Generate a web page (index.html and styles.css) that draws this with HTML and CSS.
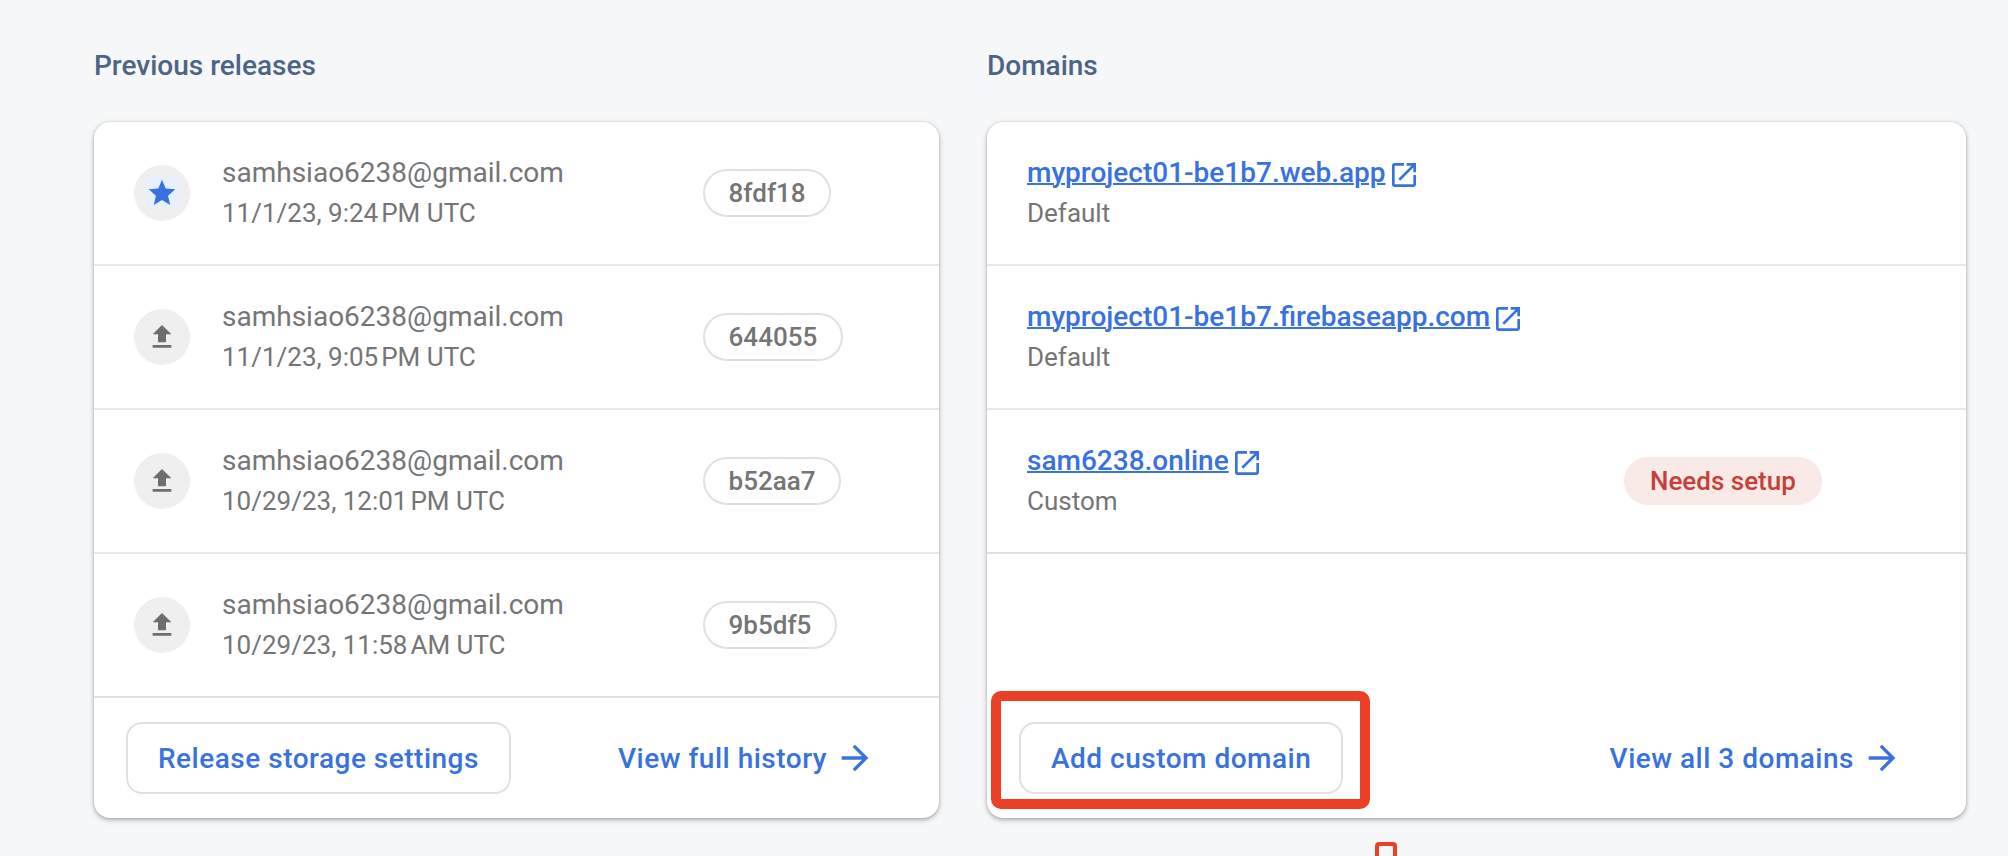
FILE: index.html
```html
<!DOCTYPE html>
<html lang="en">
<head>
<meta charset="utf-8">
<title>Hosting</title>
<link rel="stylesheet" href="styles.css">
</head>
<body>
<svg class="defs" width="0" height="0" aria-hidden="true">
  <symbol id="star" viewBox="0 0 24 24"><path d="M12 17.27L18.18 21l-1.64-7.03L22 9.24l-7.19-.61L12 2 9.19 8.63 2 9.24l5.46 4.73L5.82 21z"/></symbol>
  <symbol id="upload" viewBox="0 0 24 24"><path d="M9 16h6v-6h4l-7-7-7 7h4zM5 18h14v2H5z"/></symbol>
  <symbol id="open" viewBox="0 0 24 24"><path d="M19 19H5V5h7V3H5a2 2 0 0 0-2 2v14a2 2 0 0 0 2 2h14c1.1 0 2-.9 2-2v-7h-2v7zM14 3v2h3.59l-9.83 9.83 1.41 1.41L19 6.41V10h2V3h-7z"/></symbol>
  <symbol id="arrow" viewBox="0 0 24 24"><path d="M12 4l-1.41 1.41L16.17 11H4v2h12.17l-5.58 5.59L12 20l8-8z"/></symbol>
</svg>
<main class="page">
  <section class="panel releases">
    <h2 class="title">Previous releases</h2>
    <div class="card">
      <div class="row">
        <span class="status"><svg class="status-icon current"><use href="#star"/></svg></span>
        <div class="info"><div class="primary">samhsiao6238@gmail.com</div><div class="secondary">11/1/23, 9:24<span class="meridiem">PM</span> UTC</div></div>
        <span class="chip">8fdf18</span>
      </div>
      <div class="row">
        <span class="status"><svg class="status-icon"><use href="#upload"/></svg></span>
        <div class="info"><div class="primary">samhsiao6238@gmail.com</div><div class="secondary">11/1/23, 9:05<span class="meridiem">PM</span> UTC</div></div>
        <span class="chip">644055</span>
      </div>
      <div class="row">
        <span class="status"><svg class="status-icon"><use href="#upload"/></svg></span>
        <div class="info"><div class="primary">samhsiao6238@gmail.com</div><div class="secondary">10/29/23, 12:01<span class="meridiem">PM</span> UTC</div></div>
        <span class="chip">b52aa7</span>
      </div>
      <div class="row last">
        <span class="status"><svg class="status-icon"><use href="#upload"/></svg></span>
        <div class="info"><div class="primary">samhsiao6238@gmail.com</div><div class="secondary">10/29/23, 11:58<span class="meridiem">AM</span> UTC</div></div>
        <span class="chip">9b5df5</span>
      </div>
      <div class="footer">
        <button class="button">Release storage settings</button>
        <a class="more">View full history<svg class="arrow"><use href="#arrow"/></svg></a>
      </div>
    </div>
  </section>
  <section class="panel domains">
    <h2 class="title">Domains</h2>
    <div class="card">
      <div class="row">
        <div class="info"><div class="primary"><a class="link">myproject01-be1b7.web.app</a><svg class="open"><use href="#open"/></svg></div><div class="secondary">Default</div></div>
      </div>
      <div class="row">
        <div class="info"><div class="primary"><a class="link">myproject01-be1b7.firebaseapp.com</a><svg class="open"><use href="#open"/></svg></div><div class="secondary">Default</div></div>
      </div>
      <div class="row last">
        <div class="info"><div class="primary"><a class="link">sam6238.online</a><svg class="open"><use href="#open"/></svg></div><div class="secondary">Custom</div></div>
        <span class="chip warn">Needs setup</span>
      </div>
      <div class="footer">
        <button class="button">Add custom domain</button>
        <a class="more">View all 3 domains<svg class="arrow"><use href="#arrow"/></svg></a>
      </div>
      <div class="highlight"></div>
    </div>
  </section>
  <div class="callout"></div>
</main>
</body>
</html>
```
FILE: styles.css
```css
* {
  box-sizing: border-box;
}

body {
  margin: 0;
  background: #f6f7f9;
  color: #757575;
  font-family: Roboto, sans-serif;
}

.defs {
  position: absolute;
}

.page {
  position: relative;
  display: grid;
  grid-template-columns: 845px 979px;
  column-gap: 48px;
  height: 856px;
  padding: 46px 42px 0 94px;
  overflow: hidden;
}

.title {
  margin: 0 0 36px;
  color: #4d6485;
  font-size: 28px;
  font-weight: 500;
  line-height: 40px;
}

.card {
  position: relative;
  display: flex;
  flex-direction: column;
  height: 696px;
  border-radius: 16px;
  background: #fff;
  box-shadow: 0 0 2px rgba(0, 0, 0, .16), 0 2px 4px rgba(0, 0, 0, .26), 0 2px 10px rgba(0, 0, 0, .06);
}

.row {
  display: flex;
  align-items: center;
  height: 144px;
  padding: 0 40px;
  border-bottom: 2px solid #e8e8ec;
}

.row.last {
  border-bottom-color: #e0e0e0;
}

.status {
  display: flex;
  align-items: center;
  justify-content: center;
  width: 56px;
  height: 56px;
  margin-right: 32px;
  border-radius: 50%;
  background: #efefef;
}

.status-icon {
  width: 32px;
  height: 32px;
  fill: #6e6e6e;
}

.status-icon.current {
  background: #e8f0fe;
  fill: #3871e0;
}

.info {
  white-space: nowrap;
}

.releases .info {
  width: 481px;
}

.domains .info {
  width: 597px;
}

.primary {
  display: flex;
  align-items: center;
  height: 40px;
  font-size: 28px;
  line-height: 40px;
}

.secondary {
  height: 40px;
  font-size: 26px;
  line-height: 40px;
}

.meridiem {
  margin-left: 3px;
}

.link {
  color: #3871e0;
  font-weight: 500;
  text-decoration: underline;
  text-decoration-thickness: 2px;
}

.open {
  width: 32px;
  height: 32px;
  margin: 4px 0 0 2px;
  fill: #3871e0;
}

.chip {
  height: 48px;
  padding: 0 23.6px;
  border: 2px solid #e0e0e0;
  border-radius: 24px;
  font-size: 26px;
  font-weight: 500;
  line-height: 44px;
}

.chip.warn {
  padding: 0 24px;
  border-color: #f9e9e7;
  background: #f9e9e7;
  color: #c5403a;
}

.footer {
  display: flex;
  align-items: center;
  justify-content: space-between;
  height: 120px;
  margin-top: auto;
  padding: 0 64px 0 32px;
}

.button {
  height: 72px;
  padding: 2px 30px 0;
  border: 2px solid #e0e0e0;
  border-radius: 16px;
  background: #fff;
  color: #3871e0;
  font: 500 28px/66px Roboto, sans-serif;
  letter-spacing: .5px;
}

.more {
  display: flex;
  align-items: center;
  gap: 8px;
  color: #3871e0;
  font-size: 28px;
  font-weight: 500;
  letter-spacing: .5px;
}

.arrow {
  width: 40px;
  height: 40px;
  fill: #3871e0;
}

/* Red annotations lie over the page content. */
.highlight {
  position: absolute;
  left: 4px;
  top: 569px;
  width: 379px;
  height: 118px;
  border: 10px solid #eb4026;
  border-radius: 10px;
}

.callout {
  position: absolute;
  left: 1375px;
  top: 842px;
  width: 22px;
  height: 40px;
  border: 4px solid #eb4026;
  border-radius: 4px;
}
```
